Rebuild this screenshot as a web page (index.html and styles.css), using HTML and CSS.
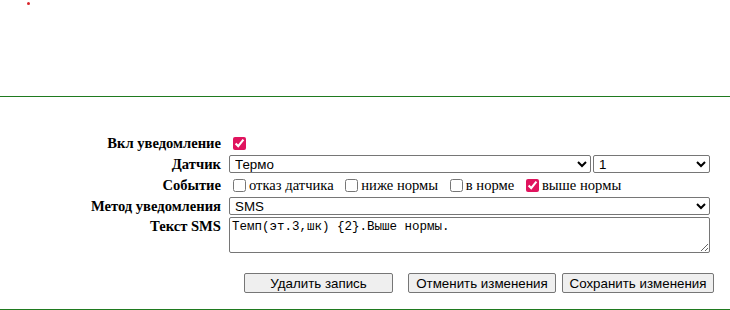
FILE: index.html
```html
<!DOCTYPE html>
<html lang="ru">
<head>
  <meta charset="UTF-8" />
  <title>Уведомление</title>
  <link rel="stylesheet" href="styles.css">
</head>
<body>
  <div class="top">
    <span class="dot"></span>
  </div>

  <form class="notify-form">
    <table class="fields">
      <tr class="row-check">
        <td class="label">Вкл уведомление</td>
        <td><input type="checkbox" checked /></td>
      </tr>
      <tr>
        <td class="label">Датчик</td>
        <td>
          <div class="pair">
            <select class="sel-sensor"><option>Термо</option></select>
            <select class="sel-num"><option>1</option></select>
          </div>
        </td>
      </tr>
      <tr class="row-check">
        <td class="label">Событие</td>
        <td class="events">
          <label><input type="checkbox" />отказ датчика</label>
          <label><input type="checkbox" />ниже нормы</label>
          <label><input type="checkbox" />в норме</label>
          <label><input type="checkbox" checked />выше нормы</label>
        </td>
      </tr>
      <tr>
        <td class="label">Метод уведомления</td>
        <td><select class="sel-full"><option>SMS</option></select></td>
      </tr>
      <tr>
        <td class="label label-top">Текст SMS</td>
        <td><textarea class="sms">Темп(эт.3,шк) {2}.Выше нормы.</textarea></td>
      </tr>
    </table>

    <div class="actions">
      <button type="button" class="btn btn-delete">Удалить запись</button>
      <button type="button" class="btn btn-cancel">Отменить изменения</button>
      <button type="button" class="btn btn-save">Сохранить изменения</button>
    </div>
  </form>
  <div class="bottom"></div>
</body>
</html>
```

FILE: styles.css
```css
body {
  margin: 0;
  font-family: "Liberation Serif", "Times New Roman", serif;
  background: #ffffff;
  color: #000;
}

.top {
  height: 94px;
  border-bottom: 1px solid #1f7a1f;
}

.dot {
  display: block;
  width: 3px;
  height: 3px;
  margin: 2px 0 0 27px;
  border-radius: 50%;
  background: #d9262b;
}

.notify-form {
  padding-top: 34px;
}

.fields {
  border-collapse: separate;
  border-spacing: 0 2px;
}

.fields td {
  padding: 0;
}

.label {
  width: 221px;
  padding-right: 8px !important;
  text-align: right;
  font-weight: bold;
  font-size: 14.6px;
  vertical-align: middle;
  white-space: nowrap;
}

.label-top {
  vertical-align: top;
  padding-top: 1px !important;
}

.row-check td {
  height: 20px;
}

input[type="checkbox"] {
  accent-color: #e0145e;
  width: 13px;
  height: 13px;
  margin: 3px 3px 3px 4px;
  vertical-align: -2px;
}

.events {
  font-size: 14.6px;
}

.events label {
  margin-right: 4px;
}

.pair {
  display: flex;
  gap: 2px;
}

select {
  height: 18px;
  font-family: "Liberation Sans", Arial, sans-serif;
  font-size: 13.33px;
  border: 1px solid #767676;
  border-radius: 2px;
  background: #fff;
  padding: 0 0 0 1px;
  margin: 0;
  box-sizing: border-box;
}

.sel-sensor {
  width: 362px;
}

.sel-num {
  width: 117px;
}

.sel-full {
  width: 481px;
}

.sms {
  display: block;
  width: 481px;
  height: 36px;
  box-sizing: border-box;
  margin: 0;
  padding: 2px 2px;
  font-family: "Liberation Mono", "Courier New", monospace;
  font-size: 12.5px;
  border: 1px solid #767676;
  border-radius: 2px;
}

.actions {
  display: flex;
  padding: 18px 0 16px 244px;
  gap: 6px;
}

.btn {
  height: 20px;
  padding: 0;
  font-family: "Liberation Sans", Arial, sans-serif;
  font-size: 13.33px;
  background: #efefef;
  border: 1px solid #767676;
  border-radius: 2px;
  color: #000;
}

.btn-delete {
  width: 149px;
  margin-right: 9px;
}

.btn-cancel {
  width: 148px;
}

.btn-save {
  width: 152px;
}

.bottom {
  border-top: 1px solid #1f7a1f;
}
```
